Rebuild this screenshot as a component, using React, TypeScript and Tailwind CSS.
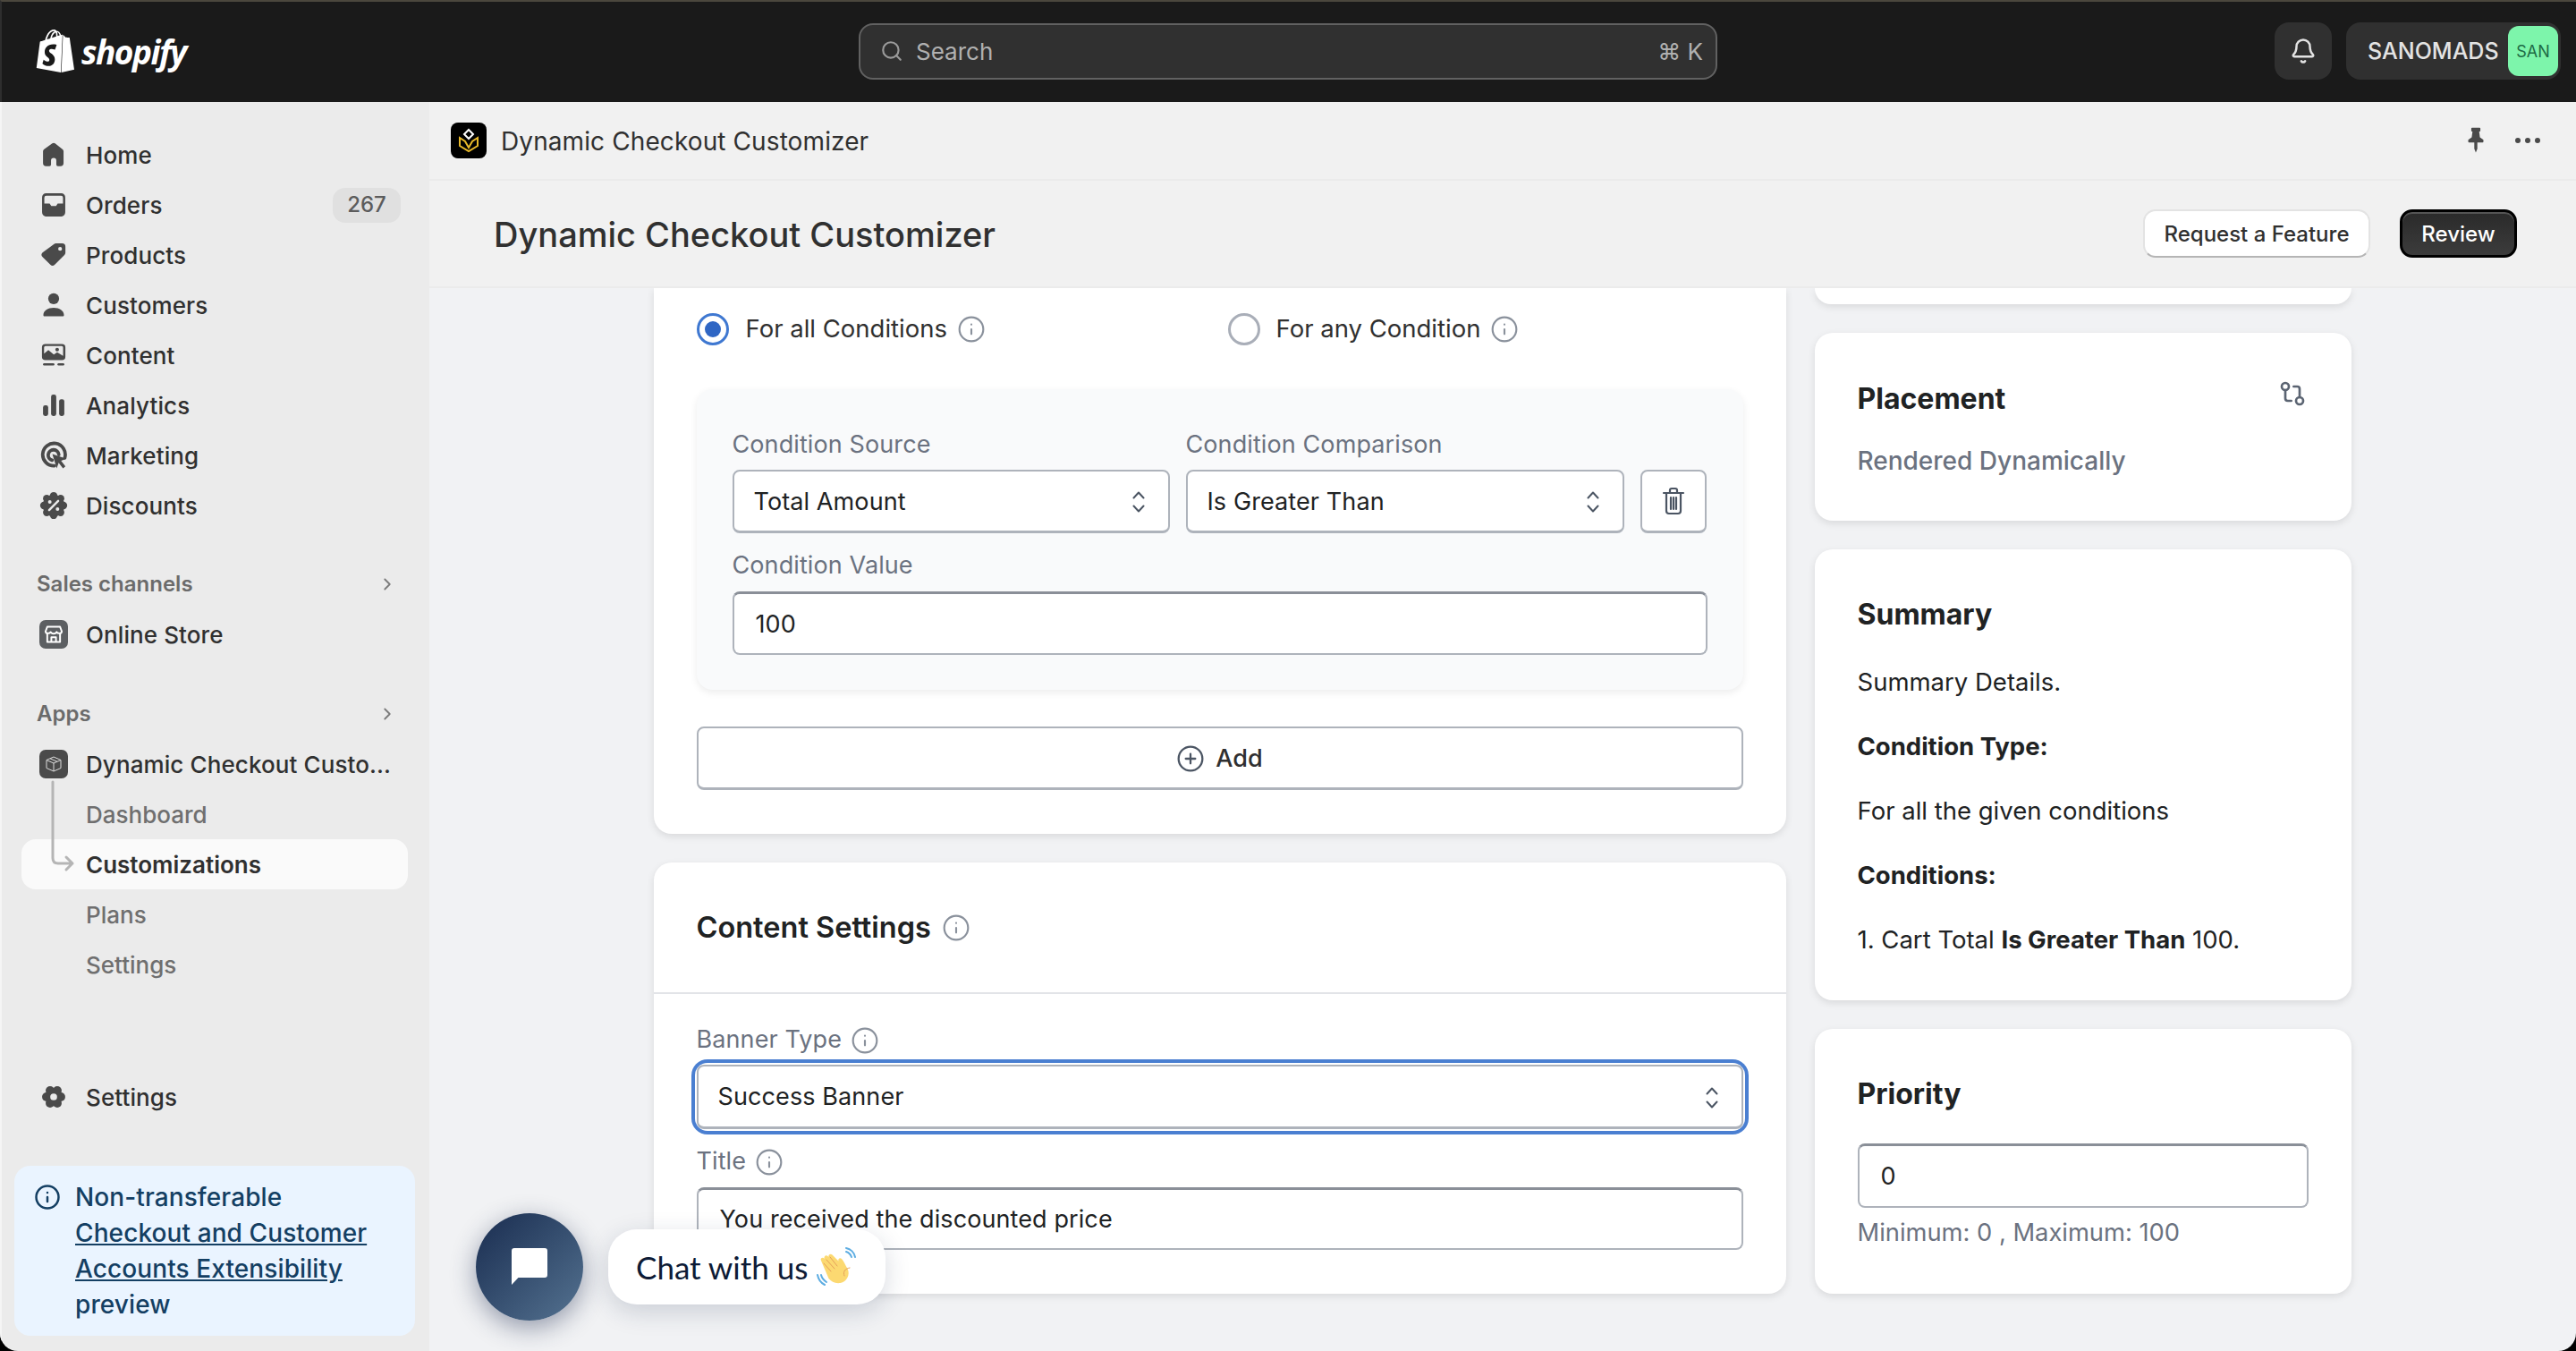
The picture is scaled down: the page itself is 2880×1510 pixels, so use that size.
import React from "react";
import { Bell, GitCompare, Info, Search, ChevronRight, CirclePlus } from "lucide-react";
import { SiShopify } from "react-icons/si";

const Ico = ({ children, size = 32 }: { children: React.ReactNode; size?: number }) => (
  <svg width={size} height={size} viewBox="0 0 20 20" fill="#4a4a4a" className="shrink-0">{children}</svg>
);

const HomeI = () => <Ico size={34}><path d="M9.08 2.54a1.5 1.5 0 0 1 1.84 0l5 3.9c.36.28.58.72.58 1.18V15.5a2 2 0 0 1-2 2h-1.75a1 1 0 0 1-1-1v-2.75a1.75 1.75 0 0 0-3.5 0v2.75a1 1 0 0 1-1 1H5a2 2 0 0 1-2-2V7.62c0-.46.22-.9.58-1.18z" /></Ico>;
const OrdersI = () => <Ico size={36}><path fillRule="evenodd" d="M5 2.75h10a2.75 2.75 0 0 1 2.2 2.75v9A2.75 2.75 0 0 1 15 17.2H5a2.75 2.75 0 0 1-2.2-2.7v-9A2.75 2.75 0 0 1 5 2.75z M4.2 9.2h3.3l1 1.5h3l1-1.5h3.3V5.5a1.2 1.2 0 0 0-1.2-1.2H5.4a1.2 1.2 0 0 0-1.2 1.2z" /></Ico>;
const TagI = () => <Ico size={36}><path fillRule="evenodd" d="M11.5 2.8h3.8a2 2 0 0 1 2 2v3.8a2 2 0 0 1-.6 1.4l-6 6a2 2 0 0 1-2.8 0L3.1 11.3a2 2 0 0 1 0-2.8l7-5.1a2 2 0 0 1 1.4-.6z M14 5a1.2 1.2 0 1 0 0 2.4A1.2 1.2 0 0 0 14 5z" /></Ico>;
const PersonI = () => <Ico size={36}><circle cx="10" cy="6" r="3.4" /><path d="M3.6 16.2c0-2.8 2.8-4.6 6.4-4.6s6.4 1.8 6.4 4.6c0 .4-.3.7-.7.7H4.3c-.4 0-.7-.3-.7-.7z" /></Ico>;
const ContentI = () => <Ico size={34}><path fillRule="evenodd" d="M4.5 2.6h11a2.2 2.2 0 0 1 2.2 2.2v6.2a2.2 2.2 0 0 1-2.2 2.2h-11a2.2 2.2 0 0 1-2.2-2.2V4.800a2.200 2.200 0 0 1 2.200-2.200z M4.600 4a.9.9 0 0 0-.9.900v4l2.800-2.300 3.600 3 2.200-1.500 3.900 2.400V4.900a.9.9 0 0 0-.9-.9z" /><circle cx="12.300" cy="6.300" r="1.200" /><rect x="3" y="15.300" width="7.500" height="1.500" rx=".7" /><rect x="12.500" y="15.300" width="4.500" height="1.500" rx=".7" /></Ico>;
const AnalyticsI = () => <Ico size={34}><rect x="3" y="10" width="3.400" height="7" rx="1.400" /><rect x="8.300" y="3" width="3.400" height="14" rx="1.400" /><rect x="13.600" y="6" width="3.400" height="11" rx="1.400" /></Ico>;
const MarketingI = () => <Ico size={36}><path fill="none" stroke="#4a4a4a" strokeWidth="2.100" strokeLinecap="round" d="M10.500 16.500a7 7 0 1 1 6.400-5" /><path fill="none" stroke="#4a4a4a" strokeWidth="2.100" strokeLinecap="round" d="M9 13a3.300 3.300 0 1 1 4.200-3.500" /><path d="M9.200 9.200l8.800 2.900-3.400 1.300 2.700 3.400-1.500 1.200-2.700-3.400-1.200 3.400z" /></Ico>;
const DiscountI = () => (
  <Ico size={36}>
    {[0, 45, 90, 135, 180, 225, 270, 315].map((a) => (
      <circle key={a} cx={10 + 6.1 * Math.cos((a * Math.PI) / 180)} cy={10 + 6.100 * Math.sin((a * Math.PI) / 180)} r="2.300" />
    ))}
    <circle cx="10" cy="10" r="6.800" />
    <path d="M7.200 12.800l5.600-5.600" stroke="#ebebeb" strokeWidth="1.400" strokeLinecap="round" />
    <circle cx="7.600" cy="7.800" r="1.100" fill="#ebebeb" />
    <circle cx="12.400" cy="12.200" r="1.100" fill="#ebebeb" />
  </Ico>
);
const GearI = () => (
  <Ico size={32}>
    {[0, 60, 120, 180, 240, 300].map((a) => (
      <circle key={a} cx={10 + 5 * Math.cos((a * Math.PI) / 180)} cy={10 + 5 * Math.sin((a * Math.PI) / 180)} r="3.100" />
    ))}
    <circle cx="10" cy="10" r="5.500" />
    <circle cx="10" cy="10" r="2.400" fill="#ebebeb" />
  </Ico>
);
const StoreI = () => (
  <div className="flex h-[32px] w-[32px] shrink-0 items-center justify-center rounded-[7px] bg-[#5c5f62]">
    <svg width="26" height="26" viewBox="0 0 20 20" fill="none" stroke="#fff" strokeWidth="1.500" strokeLinejoin="round">
      <path d="M4.500 3.500h11l1.500 4a2 2 0 0 1-2.300 1.600A2.400 2.400 0 0 1 12.500 8a2.900 2.900 0 0 1-5 0 2.400 2.400 0 0 1-2.200 1.100A2 2 0 0 1 3 7.500z" />
      <path d="M4.500 9.500v7h11v-7M8 16.500v-4h4v4" />
    </svg>
  </div>
);
const AppBoxI = () => (
  <div className="flex h-[32px] w-[32px] shrink-0 items-center justify-center rounded-[7px] bg-[#4a4a4a]">
    <svg width="20" height="20" viewBox="0 0 20 20" fill="none" stroke="#ddd" strokeWidth="1">
      <path d="M10 2l8 3.500v9L10 18l-8-3.500v-9z M2 5.500L10 9l8-3.500M10 9v9M6 3.800l8 3.500" />
    </svg>
  </div>
);

const NavRow = ({ icon, label, badge }: { icon: React.ReactNode; label: string; badge?: string }) => (
  <div className="flex h-[56px] items-center pl-[40px] pr-[32px]">
    <div className="flex w-[36px] shrink-0 items-center justify-center">{icon}</div>
    <span className="ml-[18px] text-[26px] font-medium tracking-[0.1px] text-[#303030]">{label}</span>
    {badge && (
      <span className="ml-auto flex h-[39px] w-[76px] items-center justify-center rounded-[14px] bg-[#e0e0e0] text-[24px] font-medium text-[#5c5c5c]">{badge}</span>
    )}
  </div>
);
const SectionRow = ({ label }: { label: string }) => (
  <div className="flex h-[56px] items-center pl-[39px] pr-[36px]">
    <span className="text-[24px] font-semibold text-[#6b6b6b]">{label}</span>
    <ChevronRight size={22} strokeWidth={2} className="ml-auto text-[#7a7a7a]" />
  </div>
);
const SubRow = ({ label }: { label: string }) => (
  <div className="flex h-[56px] items-center pl-[94px]">
    <span className="text-[26px] font-medium text-[#6f6f6f]">{label}</span>
  </div>
);

const InfoI = ({ size = 32 }: { size?: number }) => <Info size={size} strokeWidth={1.6} className="shrink-0 text-[#8a919c]" />;

const Updown = () => (
  <svg width="18" height="28" viewBox="0 0 18 28" fill="none" stroke="#4b5563" strokeWidth="2" strokeLinecap="round" strokeLinejoin="round" className="shrink-0">
    <path d="M3.500 9.500L9 3.500l5.500 6M3.500 18.500L9 24.500l5.500-6" />
  </svg>
);

const fieldCls = "flex items-center rounded-[8px] border-2 border-[#aeb3bb] bg-white pt-[2px] text-[27px] tracking-[0.1px] text-[#202223]";

const Select = ({ value, cls }: { value: string; cls: string }) => (
  <div className={`${fieldCls} justify-between border-b-[3px] pl-[22px] pr-[24px] ${cls}`}>
    <span>{value}</span>
    <Updown />
  </div>
);
const Input = ({ value, cls }: { value: string; cls: string }) => (
  <div className={`${fieldCls} border-t-[3px] border-t-[#8a8f98] pl-[24px] ${cls}`}>{value}</div>
);
const Label = ({ children }: { children: React.ReactNode }) => (
  <div className="flex h-[34px] items-center gap-[10px] pt-[1px] text-[27px] tracking-[0.1px] text-[#6b7280]">{children}</div>
);

const Radio = ({ on }: { on?: boolean }) =>
  on ? (
    <span className="flex h-[36px] w-[36px] shrink-0 items-center justify-center rounded-full border-[3px] border-[#3f78d1] bg-white">
      <span className="h-[18px] w-[18px] rounded-full bg-[#2f66c4]" />
    </span>
  ) : (
    <span className="h-[36px] w-[36px] shrink-0 rounded-full border-[3px] border-[#a9aeb8] bg-white" />
  );

const cardCls = "bg-white rounded-[20px] shadow-[0_3px_8px_rgba(0,0,0,0.1)]";

const WaveHand = () => (
  <svg width="44" height="44" viewBox="0 0 44 44" className="shrink-0">
    <path d="M5 31c1 4 3 6 6 8" fill="none" stroke="#5dade2" strokeWidth="2" strokeLinecap="round" />
    <path d="M1 31c1 5 4 9 8 11" fill="none" stroke="#5dade2" strokeWidth="2" strokeLinecap="round" />
    <path d="M33 5c3 1 5 3 6 6" fill="none" stroke="#5dade2" strokeWidth="2" strokeLinecap="round" />
    <path d="M33 1c5 1 9 5 10 10" fill="none" stroke="#5dade2" strokeWidth="2" strokeLinecap="round" />
    <path d="M5 15c-1.500-2.500 1.500-4.500 3.500-2.500l.5.500c-1.500-2.500 1.500-5 3.500-3l1 1c-1-2.500 2-4.500 4-2.500l7 7c-1-2.500 1.500-4.500 3.500-2.500 2.500 2.500 4 7 6.500 11 3.500 6.500-1 15-8 16-6 .8-10-1.500-13-5z" fill="#fcd971" />
    <path d="M11 14l9 10M15 11l8 10M8 18l8 9M37 23c-5 1-8 4-6 9" fill="none" stroke="#e5a05a" strokeWidth="1" strokeLinecap="round" />
  </svg>
);

export default function App() {
  return (
    <div className="h-[1510px] w-[2880px] overflow-hidden bg-black font-['Inter',sans-serif]">
      <div className="relative flex h-full w-full flex-col overflow-hidden rounded-b-[20px]">
        <header className="flex h-[114px] shrink-0 items-center border-t-[2px] border-l-[2px] border-t-[#4b473d] border-l-[#2e2e2e] bg-[#1a1a1a] pb-[2px]">
          <div className="flex w-[958px] shrink-0 items-center pl-[36px]">
            <SiShopify size={48} className="text-white" />
            <span className="ml-[5px] font-['Open_Sans',sans-serif] text-[37px] font-bold italic leading-none tracking-[-1.500px] text-white">shopify</span>
          </div>
          <div className="flex h-[63px] w-[960px] shrink-0 items-center rounded-[16px] border-2 border-[#616161] bg-[#303030] pl-[22px] pr-[14px] text-[26px] text-[#b0b0b0]">
            <Search size={26} strokeWidth={2} className="text-[#9a9a9a]" />
            <span className="ml-[14px]">Search</span>
            <span className="ml-auto">⌘ K</span>
          </div>
          <div className="ml-[623px] flex h-[64px] w-[64px] items-center justify-center rounded-[16px] bg-[#303030]">
            <Bell size={30} strokeWidth={2} className="text-[#e3e3e3]" />
          </div>
          <div className="ml-[16px] flex h-[64px] w-[240px] items-center rounded-[16px] bg-[#303030] pl-[24px] pr-[3px]">
            <span className="pt-[2px] text-[25px] font-medium text-[#e3e3e3]">SANOMADS</span>
            <span className="ml-auto flex h-[56px] w-[56px] items-center justify-center rounded-[12px] bg-[#7df5ab] text-[18px] text-[#1e6b45]">SAN</span>
          </div>
        </header>

        <div className="flex min-h-0 flex-1">
          <aside className="flex w-[480px] shrink-0 flex-col border-l-[2px] border-l-[#f5f5f5] bg-[#ebebeb] pt-[31px]">
            <NavRow icon={<HomeI />} label="Home" />
            <NavRow icon={<OrdersI />} label="Orders" badge="267" />
            <NavRow icon={<TagI />} label="Products" />
            <NavRow icon={<PersonI />} label="Customers" />
            <NavRow icon={<ContentI />} label="Content" />
            <NavRow icon={<AnalyticsI />} label="Analytics" />
            <NavRow icon={<MarketingI />} label="Marketing" />
            <NavRow icon={<DiscountI />} label="Discounts" />
            <div className="mt-[32px]"><SectionRow label="Sales channels" /></div>
            <NavRow icon={<StoreI />} label="Online Store" />
            <div className="mt-[33px]"><SectionRow label="Apps" /></div>
            <NavRow icon={<AppBoxI />} label="Dynamic Checkout Custo..." />
            <SubRow label="Dashboard" />
            <div className="relative ml-[22px] mr-[24px] flex h-[56px] items-center rounded-[16px] bg-[#fafafa] pl-[72px]">
              <span className="text-[26px] font-semibold text-[#303030]">Customizations</span>
              <svg width="28" height="104" viewBox="0 0 28 104" fill="none" stroke="#b5b5b5" strokeWidth="3" strokeLinecap="round" strokeLinejoin="round" className="absolute left-[33px] top-[-66px]">
                <path d="M2 2v85q0 6 6 6h16M17 86l7 7-7 7" />
              </svg>
            </div>
            <SubRow label="Plans" />
            <SubRow label="Settings" />
            <div className="mt-auto"><NavRow icon={<GearI />} label="Settings" /></div>
            <div className="mb-[17px] ml-[14px] mr-[16px] mt-[49px] flex h-[190px] rounded-[18px] bg-[#eaf4ff] pl-[22px] pt-[15px] text-[#143f63]">
              <Info size={30} strokeWidth={2} className="mt-[5px] shrink-0" />
              <div className="ml-[16px] text-[28px] font-medium leading-[40px] tracking-[0.1px]">
                Non-transferable
                <br />
                <span className="underline">Checkout and Customer</span>
                <br />
                <span className="underline">Accounts Extensibility</span>
                <br />
                preview
              </div>
            </div>
          </aside>

          <main className="flex min-w-0 flex-1 flex-col bg-[#f1f2f4]">
            <div className="flex h-[88px] shrink-0 items-center border-b-2 border-[#ebebeb] bg-[#f1f1f1] pl-[24px] pr-[40px]">
              <div className="flex h-[40px] w-[40px] items-center justify-center rounded-[8px] bg-black">
                <svg width="26" height="28" viewBox="0 0 26 28" fill="none" strokeWidth="2">
                  <path d="M13 2l5 5-5 5-5-5z" stroke="#fff" />
                  <path d="M3 11v9l10 6 10-6v-9l-6 4-4 7-4-7z" stroke="#e8b92a" />
                </svg>
              </div>
              <span className="ml-[16px] pt-[2px] text-[28px] tracking-[0.1px] text-[#303030]">Dynamic Checkout Customizer</span>
              <svg width="22" height="30" viewBox="0 0 26 42" fill="#4a4a4a" className="ml-auto" preserveAspectRatio="none">
                <path d="M8 1h10a1 1 0 0 1 1 1v4a1 1 0 0 1-1 1h-.6l1 9 4.600 4v3a1 1 0 0 1-1 1H15v10l-2 6-2-6V24H4a1 1 0 0 1-1-1v-3l4.600-4 1-9H8a1 1 0 0 1-1-1V2a1 1 0 0 1 1-1z" />
              </svg>
              <div className="ml-[33px] flex gap-[5px]">
                <span className="h-[6px] w-[6px] rounded-full bg-[#4a4a4a]" />
                <span className="h-[6px] w-[6px] rounded-full bg-[#4a4a4a]" />
                <span className="h-[6px] w-[6px] rounded-full bg-[#4a4a4a]" />
              </div>
            </div>
            <div className="flex h-[120px] shrink-0 items-center border-b-2 border-[#ebebeb] bg-[#f1f1f1] pl-[72px] pr-[66px]">
              <h1 className="pt-[2px] text-[38px] font-medium text-[#303030]">Dynamic Checkout Customizer</h1>
              <button className="ml-auto h-[54px] w-[254px] rounded-[14px] border-2 border-[#e3e3e3] border-b-[#b5b5b5] bg-white pt-[1px] text-[24px] font-medium text-[#303030]">Request a Feature</button>
              <button className="ml-[33px] h-[54px] w-[131px] rounded-[14px] border-[3px] border-black bg-gradient-to-b from-[#2a2a2a] to-[#3c3c3c] pt-[1px] text-[24px] font-medium text-white shadow-[inset_0_2px_0_rgba(255,255,255,0.2)]">Review</button>
            </div>

            <div className="flex min-h-0 flex-1 justify-center overflow-hidden pr-[1px]">
              <div className="grid w-[1898px] grid-cols-[1266px_600px] items-start gap-x-[32px]">
                <div className="flex flex-col gap-[32px]">
                  <section className={`${cardCls} rounded-t-none px-[48px] pb-[49px] pt-[28px]`}>
                    <div className="flex h-[36px] items-center text-[27.500px] text-[#303030]">
                      <div className="flex w-[594px] items-center">
                        <Radio on />
                        <span className="ml-[19px]">For all Conditions</span>
                        <span className="ml-[11px]"><InfoI /></span>
                      </div>
                      <Radio />
                      <span className="ml-[18px]">For any Condition</span>
                      <span className="ml-[11px]"><InfoI /></span>
                    </div>
                    <div className="mt-[49px] h-[336px] rounded-[18px] bg-[#f9fafb] px-[40px] pt-[45px] shadow-[0_3px_8px_rgba(0,0,0,0.08)]">
                      <div className="flex gap-[18px]">
                        <div className="w-[489px]">
                          <Label>Condition Source</Label>
                          <Select value="Total Amount" cls="mt-[11px] h-[71px]" />
                        </div>
                        <div className="w-[490px]">
                          <Label>Condition Comparison</Label>
                          <Select value="Is Greater Than" cls="mt-[11px] h-[71px]" />
                        </div>
                        <div className="mt-[45px] flex h-[71px] w-[74px] items-center justify-center rounded-[8px] border-2 border-b-[3px] border-[#aeb3bb] bg-white">
                          <svg width="30" height="32" viewBox="0 0 30 32" fill="none" stroke="#4b5563" strokeWidth="2.200" strokeLinecap="round" strokeLinejoin="round">
                            <path d="M4 7h22M11 7V4a2 2 0 0 1 2-2h4a2 2 0 0 1 2 2v3M7 7v20a3 3 0 0 0 3 3h10a3 3 0 0 0 3-3V7M12 12v13M15 12v13M18 12v13" />
                          </svg>
                        </div>
                      </div>
                      <div className="mt-[19px]"><Label>Condition Value</Label></div>
                      <Input value="100" cls="mt-[12px] h-[71px]" />
                    </div>
                    <div className="mt-[41px] flex h-[71px] items-center justify-center gap-[12px] rounded-[8px] border-2 border-b-[3px] border-[#aeb3bb] bg-white pt-[2px] text-[27px] font-medium text-[#303030]">
                      <CirclePlus size={32} strokeWidth={1.700} className="text-[#4b5563]" />
                      Add
                    </div>
                  </section>

                  <section className={`${cardCls} h-[482px]`}>
                    <div className="flex h-[147px] items-center gap-[12px] border-b-2 border-[#e2e4e8] px-[48px] pt-[1px]">
                      <h2 className="text-[32.500px] font-semibold text-[#202223]">Content Settings</h2>
                      <InfoI size={32} />
                    </div>
                    <div className="px-[48px] pt-[34px]">
                      <Label>Banner Type <InfoI /></Label>
                      <div className="mt-[11px] rounded-[12px] shadow-[0_0_0_2px_#fff,0_0_0_6px_#4a7fd1]">
                        <Select value="Success Banner" cls="h-[72px]" />
                      </div>
                      <div className="mt-[19px]"><Label>Title <InfoI /></Label></div>
                      <Input value="You received the discounted price" cls="mt-[12px] h-[70px]" />
                    </div>
                  </section>
                </div>

                <div className="flex flex-col gap-[32px]">
                  <section className={`${cardCls} h-[18px] rounded-t-none`} />
                  <section className={`${cardCls} h-[210px] px-[48px] pt-[54px]`}>
                    <div className="flex items-start justify-between">
                      <h2 className="text-[32px] font-bold leading-[40px] text-[#202223]">Placement</h2>
                      <GitCompare size={32} strokeWidth={2} className="mr-[2px] mt-[-2px] text-[#5b6472]" />
                    </div>
                    <p className="mt-[31px] text-[28px] font-medium leading-[36px] text-[#6b7280]">Rendered Dynamically</p>
                  </section>
                  <section className={`${cardCls} h-[504px] px-[48px] pt-[53px] text-[27.500px] leading-[36px] text-[#202223]`}>
                    <h2 className="text-[32px] font-bold leading-[40px]">Summary</h2>
                    <p className="mt-[37px]">Summary Details.</p>
                    <p className="mt-[36px] font-bold">Condition Type:</p>
                    <p className="mt-[36px]">For all the given conditions</p>
                    <p className="mt-[36px] font-bold">Conditions:</p>
                    <p className="mt-[36px]">1. Cart Total <b className="font-bold">Is Greater Than</b> 100.</p>
                  </section>
                  <section className={`${cardCls} h-[296px] px-[48px] pt-[53px]`}>
                    <h2 className="text-[32px] font-bold leading-[40px] text-[#202223]">Priority</h2>
                    <Input value="0" cls="mt-[35px] h-[72px]" />
                    <p className="mt-[10px] text-[27.300px] leading-[36px] text-[#6b7280]">Minimum: 0 , Maximum: 100</p>
                  </section>
                </div>
              </div>
            </div>
          </main>
        </div>

        <div className="absolute left-[532px] top-[1356px] flex items-center">
          <div className="flex h-[120px] w-[120px] items-center justify-center rounded-full bg-gradient-to-br from-[#1a2d50] to-[#557391] shadow-[0_8px_28px_rgba(30,45,80,0.45)]">
            <svg width="40" height="42" viewBox="0 0 40 42" fill="#fff">
              <path d="M3 0h34a3 3 0 0 1 3 3v27a3 3 0 0 1-3 3H7.500L0 41V3a3 3 0 0 1 3-3z" />
            </svg>
          </div>
          <div className="ml-[28px] flex h-[84px] w-[310px] items-center rounded-[32px] bg-white pl-[31px] font-['Lato',sans-serif] text-[35px] text-[#0d1b36] shadow-[0_8px_28px_rgba(30,45,80,0.18)]">
            Chat with us
            <span className="ml-[10px]"><WaveHand /></span>
          </div>
        </div>
      </div>
    </div>
  );
}
